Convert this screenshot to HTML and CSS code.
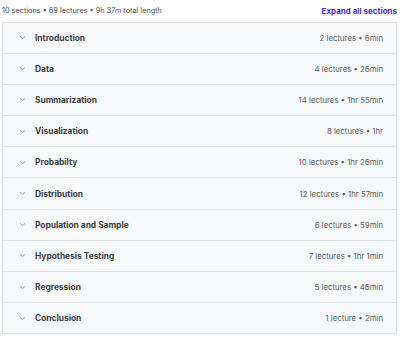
FILE: index.html
```html
<!DOCTYPE html>
<html>
<head>
<meta charset="utf-8">
<link rel="stylesheet" href="styles.css">
</head>
<body>
<div class="wrap">
  <div class="head">
    <span class="summary">10 sections • 69 lectures • 9h 37m total length</span>
    <span class="expand">Expand all sections</span>
  </div>
  <div class="list">
    <div class="row"><div class="left"><svg class="chev" viewBox="0 0 10 6"><path d="M1.5 1.5 L5 4.5 L8.5 1.5" /></svg><span class="title">Introduction</span></div><span class="meta">2 lectures • 6min</span></div>
    <div class="row"><div class="left"><svg class="chev" viewBox="0 0 10 6"><path d="M1.5 1.5 L5 4.5 L8.5 1.5" /></svg><span class="title">Data</span></div><span class="meta">4 lectures • 26min</span></div>
    <div class="row"><div class="left"><svg class="chev" viewBox="0 0 10 6"><path d="M1.5 1.5 L5 4.5 L8.5 1.5" /></svg><span class="title">Summarization</span></div><span class="meta">14 lectures • 1hr 55min</span></div>
    <div class="row"><div class="left"><svg class="chev" viewBox="0 0 10 6"><path d="M1.5 1.5 L5 4.5 L8.5 1.5" /></svg><span class="title">Visualization</span></div><span class="meta">8 lectures • 1hr</span></div>
    <div class="row"><div class="left"><svg class="chev" viewBox="0 0 10 6"><path d="M1.5 1.5 L5 4.5 L8.5 1.5" /></svg><span class="title">Probabilty</span></div><span class="meta">10 lectures • 1hr 26min</span></div>
    <div class="row"><div class="left"><svg class="chev" viewBox="0 0 10 6"><path d="M1.5 1.5 L5 4.5 L8.5 1.5" /></svg><span class="title">Distribution</span></div><span class="meta">12 lectures • 1hr 57min</span></div>
    <div class="row"><div class="left"><svg class="chev" viewBox="0 0 10 6"><path d="M1.5 1.5 L5 4.5 L8.5 1.5" /></svg><span class="title">Population and Sample</span></div><span class="meta">6 lectures • 59min</span></div>
    <div class="row"><div class="left"><svg class="chev" viewBox="0 0 10 6"><path d="M1.5 1.5 L5 4.5 L8.5 1.5" /></svg><span class="title">Hypothesis Testing</span></div><span class="meta">7 lectures • 1hr 1min</span></div>
    <div class="row"><div class="left"><svg class="chev" viewBox="0 0 10 6"><path d="M1.5 1.5 L5 4.5 L8.5 1.5" /></svg><span class="title">Regression</span></div><span class="meta">5 lectures • 46min</span></div>
    <div class="row"><div class="left"><svg class="chev" viewBox="0 0 10 6"><path d="M1.5 1.5 L5 4.5 L8.5 1.5" /></svg><span class="title">Conclusion</span></div><span class="meta">1 lecture • 2min</span></div>
  </div>
</div>
</body>
</html>
```
FILE: styles.css
```css
html, body {
  margin: 0;
  padding: 0;
  background: #ffffff;
}
body {
  font-family: Inter, "Noto Sans", "Liberation Sans", sans-serif;
  color: #2d2f31;
}
.wrap {
  padding: 0 3px 0 2px;
}
.head {
  height: 21.5px;
  display: flex;
  align-items: center;
  justify-content: space-between;
}
.summary {
  font-size: 7.3px;
  color: #4a4d50;
}
.expand {
  font-size: 8px;
  font-weight: 700;
  color: #5624d0;
}
.list {
  border: 1px solid #dde2e6;
  border-bottom: none;
}
.row {
  height: 30.2px;
  border-bottom: 1px solid #dde2e6;
  background: #f7f9fa;
  display: flex;
  align-items: center;
  justify-content: space-between;
  padding: 0 13px 0 16px;
}
.left {
  display: flex;
  align-items: center;
  gap: 9px;
}
.chev {
  width: 7px;
  height: 5px;
  fill: none;
  stroke: #6a6f73;
  stroke-width: 1;
}
.title {
  font-size: 8.4px;
  font-weight: 700;
  color: #3a3c3e;
}
.meta {
  font-size: 7.8px;
  color: #595c5f;
}
```
